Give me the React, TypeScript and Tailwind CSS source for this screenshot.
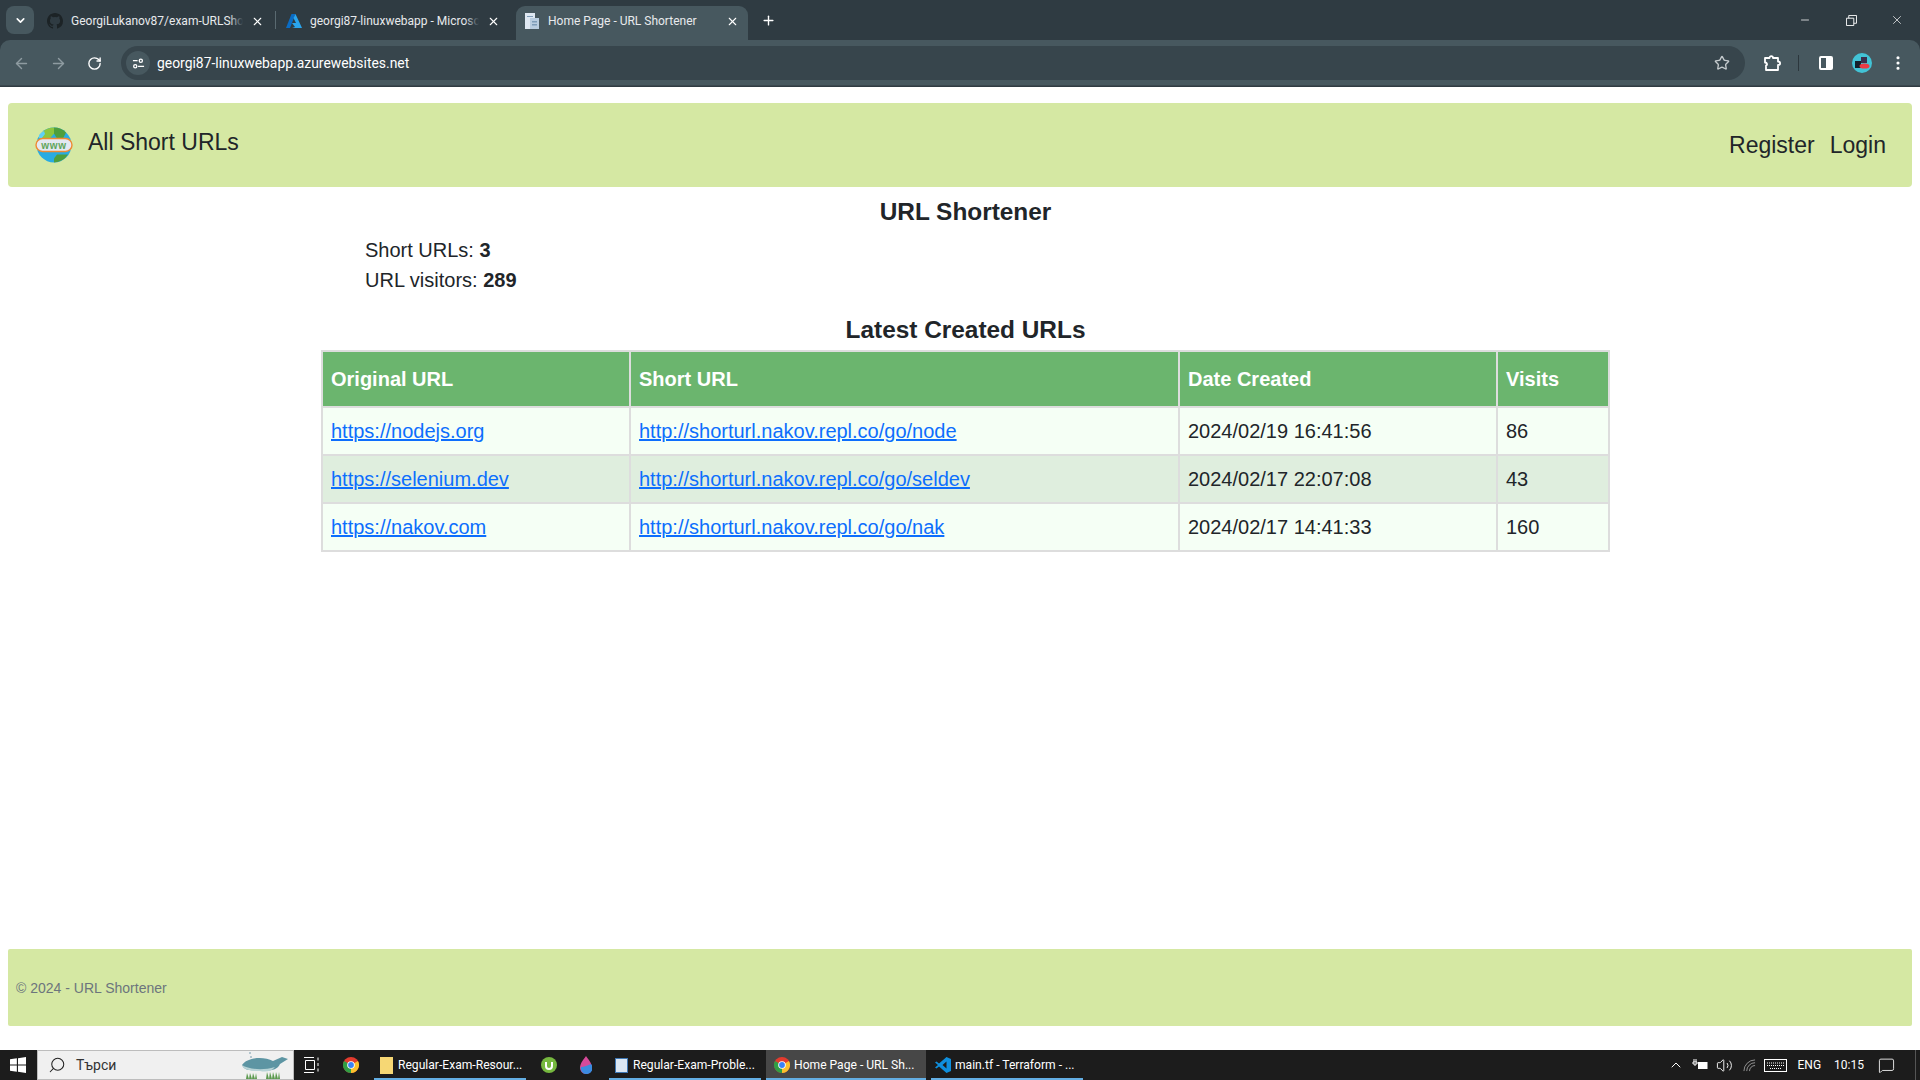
import { ChevronDown, ArrowLeft, ArrowRight, RotateCw, Star, MoreVertical, Minus, X, Plus, ChevronUp, Volume2, Search, MessageSquare } from "lucide-react";

const rows = [
  { original: "https://nodejs.org", short: "http://shorturl.nakov.repl.co/go/node", date: "2024/02/19 16:41:56", visits: 86 },
  { original: "https://selenium.dev", short: "http://shorturl.nakov.repl.co/go/seldev", date: "2024/02/17 22:07:08", visits: 43 },
  { original: "https://nakov.com", short: "http://shorturl.nakov.repl.co/go/nak", date: "2024/02/17 14:41:33", visits: 160 },
];

function GlobeIcon() {
  return (
    <svg viewBox="0 0 38 36" className="w-[38px] h-[36px]">
      <circle cx="19" cy="18" r="17.500" fill="#29abe2" />
      <path d="M19 .5a17.500 17.500 0 0 1 12 5l-3 6h-6l-3-5z" fill="#4e9f3d" />
      <path d="M8 4.500a17.500 17.500 0 0 1 11-4v6l-4 5H4z" fill="#8cc63f" />
      <path d="M4 8a17.500 17.500 0 0 1 5-4l1 3-3 4H4z" fill="#5fd0f5" />
      <path d="M19 35.500a17.500 17.500 0 0 0 14-8H22l-3 4z" fill="#4e9f3d" />
      <rect x="1" y="11.500" width="36" height="13" rx="6.500" fill="#e3e8f2" stroke="#f08a33" strokeWidth="1.400" />
      <text x="19" y="21.500" textAnchor="middle" fontSize="10" fontWeight="700" letterSpacing="0.800" fill="#5fa55a" fontFamily="Liberation Sans, sans-serif">www</text>
    </svg>
  );
}

function GithubMark() {
  return (
    <svg viewBox="0 0 16 16" className="w-4 h-4" fill="#1c2326">
      <path d="M8 0C3.58 0 0 3.58 0 8c0 3.54 2.29 6.53 5.47 7.59.4.07.55-.17.55-.38v-1.34c-2.23.48-2.69-1.07-2.69-1.07-.36-.92-.89-1.17-.89-1.17-.73-.5.05-.49.05-.49.8.06 1.23.82 1.23.82.71 1.22 1.87.87 2.33.66.07-.52.28-.87.51-1.07-1.78-.2-3.64-.89-3.64-3.95 0-.87.31-1.59.82-2.15-.08-.2-.36-1.02.08-2.12 0 0 .67-.21 2.2.82a7.6 7.6 0 0 1 4 0c1.53-1.04 2.2-.82 2.2-.82.44 1.1.16 1.92.08 2.12.51.56.82 1.27.82 2.15 0 3.07-1.87 3.75-3.65 3.95.29.25.54.73.54 1.48v2.2c0 .21.15.46.55.38A8 8 0 0 0 16 8c0-4.42-3.58-8-8-8z" />
    </svg>
  );
}

function AzureMark() {
  return (
    <svg viewBox="0 0 16 16" className="w-4 h-4">
      <path d="M5.500 1h4L4 15H0z" fill="#0a6cc4" />
      <path d="M9.500 1 16 15H6l3-1-3-4h4L7.500 5z" fill="#2aa5ee" />
    </svg>
  );
}

function PageMark() {
  return (
    <svg viewBox="0 0 16 16" className="w-4 h-4">
      <path d="M1 0h10v16H1z" fill="#dfe8f2" />
      <path d="M6 5h9v11H6z" fill="#b9cde0" />
      <path d="M3 3h6v1H3zM8 8h5v1.500H8zM8 11h5v1.500H8z" fill="#7d9cb8" />
    </svg>
  );
}

function ChromeLogo({ size = 16 }: { size?: number }) {
  return (
    <svg viewBox="0 0 16 16" width={size} height={size}>
      <circle cx="8" cy="8" r="8" fill="#e33b2e" />
      <path d="M8 8 1.070 4A8 8 0 0 0 8 16z" fill="#2f9e44" />
      <path d="M8 8 14.930 4A8 8 0 0 1 8 16z" fill="#fbc02d" />
      <circle cx="8" cy="8" r="3.800" fill="#fff" />
      <circle cx="8" cy="8" r="2.900" fill="#3b82f6" />
    </svg>
  );
}

function Avatar({ size }: { size: number }) {
  return (
    <svg viewBox="0 0 20 20" width={size} height={size}>
      <circle cx="10" cy="10" r="10" fill="#42c3d6" />
      <rect x="3" y="8" width="6" height="7" fill="#14202b" />
      <rect x="9" y="4" width="6" height="6" fill="#3a2f4d" />
      <ellipse cx="12.500" cy="13" rx="5" ry="2.600" fill="#ea3a45" />
    </svg>
  );
}

function Tab({ icon, title, active, className, fade }: { icon: React.ReactNode; title: string; active?: boolean; className: string; fade?: boolean }) {
  return (
    <div className={`relative h-[34px] pb-[4px] flex items-center gap-[8px] rounded-t-[9px] ${className} ${active ? "bg-[#47585f]" : ""}`}>
      <span className="shrink-0 w-4 h-4">{icon}</span>
      <span className="relative flex-1 overflow-hidden whitespace-nowrap text-[12px] text-[#e8eaed] font-['Roboto',sans-serif]">
        {title}
        {fade && <span className="absolute right-0 top-0 bottom-0 w-[14px] bg-gradient-to-l from-[#2f3b42] to-transparent" />}
      </span>
      <X className="w-[13px] h-[13px] text-white shrink-0" strokeWidth={2} />
    </div>
  );
}

function BrowserChrome() {
  return (
    <div className="shrink-0 h-[87px] bg-[#2f3b42] flex flex-col">
      <div className="h-[40px] flex items-end pl-[6px]">
        <div className="self-start mt-[6px] mr-[4px] w-[28px] h-[28px] rounded-[8px] bg-[#47585f] flex items-center justify-center">
          <ChevronDown className="w-[13px] h-[13px] text-white" strokeWidth={3} />
        </div>
        <Tab className="w-[237px] ml-[-2px] pl-[11px] pr-[9px]" icon={<GithubMark />} title="GeorgiLukanov87/exam-URLShortener" fade />
        <div className="self-center w-[1px] h-[18px] bg-[#5a6a71] mx-[2px]" />
        <Tab className="w-[238px] pl-[8px] pr-[16px]" icon={<AzureMark />} title="georgi87-linuxwebapp - Microsoft Azure" fade />
        <Tab className="w-[232px] pl-[8px] pr-[9px]" icon={<PageMark />} title="Home Page - URL Shortener" active />
        <Plus className="self-start mt-[13px] ml-[13px] w-[15px] h-[15px] text-white" strokeWidth={2.200} />
        <div className="ml-auto self-start flex items-center text-white">
          <div className="w-[46px] h-[40px] flex items-center justify-center"><Minus className="w-[12px] h-[12px]" strokeWidth={1.500} /></div>
          <div className="w-[46px] h-[40px] flex items-center justify-center">
            <svg viewBox="0 0 12 12" className="w-[11px] h-[11px]" fill="none" stroke="currentColor"><path d="M.5 3.500h8v8h-8zM3 3.500V.5h8.500V9H8.500" /></svg>
          </div>
          <div className="w-[46px] h-[40px] flex items-center justify-center"><X className="w-[14px] h-[14px]" strokeWidth={1.200} /></div>
        </div>
      </div>
      <div className="h-[46px] bg-[#47585f] rounded-t-[10px] flex items-center pt-[1px] pl-[13px] pr-[13px] border-b border-b-[#3b484f]">
        <ArrowLeft className="w-[17px] h-[17px] text-[#8e9ba1]" strokeWidth={2} />
        <ArrowRight className="ml-[20px] w-[17px] h-[17px] text-[#8e9ba1]" strokeWidth={2} />
        <RotateCw className="ml-[20px] w-[15px] h-[15px] text-white" strokeWidth={2.200} />
        <div className="ml-[19px] h-[34px] flex-1 rounded-full bg-[#37454c] flex items-center pl-[5px] pr-[15px]">
          <div className="w-[24px] h-[24px] rounded-full bg-[#47585f] flex items-center justify-center">
            <svg viewBox="0 0 14 14" className="w-[13px] h-[13px]" fill="none" stroke="#fff" strokeWidth="1.400"><path d="M1 4h5M6.500 10H13" /><circle cx="9.500" cy="4" r="1.700" /><circle cx="3.500" cy="10" r="1.700" /></svg>
          </div>
          <span className="ml-[7px] text-[13.900px] text-white font-['Roboto',sans-serif]">georgi87-linuxwebapp.azurewebsites.net</span>
          <Star className="ml-auto w-[16px] h-[16px] text-[#c4cacd]" strokeWidth={2} />
        </div>
        <svg viewBox="0 0 18 16" className="ml-[19px] w-[18px] h-[16px]" fill="none" stroke="#fff" strokeWidth="1.800" strokeLinejoin="round">
          <path d="M1 3h4.500c0-2.500 3.500-2.500 3.500 0H14v3.500c2.800 0 2.800 3.500 0 3.500V15H2v-4.500c1.500 0 1.500-3-1-3z" />
        </svg>
        <div className="ml-[16px] w-[1px] h-[16px] bg-[#2c373d]" />
        <div className="ml-[20px] w-[14px] h-[14px] rounded-[2px] border-2 border-white flex justify-end"><div className="w-[5px] bg-white" /></div>
        <div className="ml-[19px]"><Avatar size={20} /></div>
        <MoreVertical className="ml-[17px] w-[18px] h-[18px] text-white" strokeWidth={2.200} />
      </div>
    </div>
  );
}

function Navbar() {
  return (
    <nav className="mx-2 mt-4 h-[84px] shrink-0 rounded-[4px] bg-[#d5e8a3] flex items-center justify-between pl-[27px] pr-[26px] text-[#212529] font-['Liberation_Sans',sans-serif]">
      <a className="flex items-center gap-[15px]">
        <GlobeIcon />
        <span className="text-[23px] -mt-[5px]">All Short URLs</span>
      </a>
      <div className="flex items-center gap-[15px] text-[23px]">
        <a>Register</a>
        <a>Login</a>
      </div>
    </nav>
  );
}

function HomePage() {
  return (
    <main className="flex-1 pl-[11px] text-[#212529] font-['Liberation_Sans',sans-serif]">
      <h1 className="mt-[10px] text-center text-[24.400px] leading-[30px] font-bold">URL Shortener</h1>
      <div className="mx-auto w-[1287px] pl-[43px] mt-[8px] text-[20px] leading-[30px]">
        <div>Short URLs: <b>3</b></div>
        <div>URL visitors: <b>289</b></div>
      </div>
      <h2 className="mt-[20px] text-center text-[24.400px] leading-[30px] font-bold">Latest Created URLs</h2>
      <table className="mx-auto mt-[5px] w-[1287px] table-fixed border-collapse text-[20px]">
        <colgroup>
          <col className="w-[308px]" />
          <col className="w-[549px]" />
          <col className="w-[318px]" />
          <col className="w-[112px]" />
        </colgroup>
        <thead>
          <tr className="h-[56px] bg-[#6bb56e] text-white text-left">
            {["Original URL", "Short URL", "Date Created", "Visits"].map((h) => (
              <th key={h} className="border-2 border-[#dddddd] px-2 font-bold">{h}</th>
            ))}
          </tr>
        </thead>
        <tbody>
          {rows.map((row, i) => (
            <tr key={row.short} className={`h-[48px] ${i % 2 === 1 ? "bg-[#dfeede]" : "bg-[#f5fff5]"}`}>
              <td className="border-2 border-[#dddddd] px-2"><a className="text-[#0d6efd] underline">{row.original}</a></td>
              <td className="border-2 border-[#dddddd] px-2"><a className="text-[#0d6efd] underline">{row.short}</a></td>
              <td className="border-2 border-[#dddddd] px-2">{row.date}</td>
              <td className="border-2 border-[#dddddd] px-2">{row.visits}</td>
            </tr>
          ))}
        </tbody>
      </table>
    </main>
  );
}

function Footer() {
  return (
    <footer className="mx-2 mb-[24px] h-[77px] shrink-0 rounded-[2px] bg-[#d5e8a3] flex items-center pl-2 pt-[1px] text-[14px] text-[#6c757d] font-['Liberation_Sans',sans-serif]">
      © 2024 - URL Shortener
    </footer>
  );
}

function TaskItem({ icon, label, active, className }: { icon: React.ReactNode; label: string; active?: boolean; className: string }) {
  return (
    <div className={`h-full flex items-center gap-[4px] pt-[2px] border-b-2 border-b-[#63aee3] ${className} ${active ? "bg-[#474747] pl-[8px]" : "pl-[4px]"}`}>
      <span className="shrink-0 w-4 h-4 flex items-center justify-center">{icon}</span>
      <span className="text-[12.100px] text-white whitespace-nowrap">{label}</span>
    </div>
  );
}

function Taskbar() {
  return (
    <div className="shrink-0 h-[30px] bg-[#1c1c1c] flex items-center pl-[10px] text-white font-['Roboto',sans-serif]">
      <svg viewBox="0 0 14 14" className="w-4 h-4" fill="#fff"><path d="M0 2l6-.9V6.600H0zM7 1l7-1v6.600H7zM0 7.400h6v5.500L0 12zM7 7.400h7V14l-7-1z" /></svg>
      <div className="ml-[11px] w-[257px] h-full bg-[#f0f0f0] border border-[#bdbdbd] flex items-center pl-[10px] relative">
        <Search className="w-[18px] h-[18px] text-[#222] -scale-x-100" strokeWidth={1.400} />
        <span className="ml-[10px] text-[14px] text-[#333]">Търси</span>
        <svg viewBox="0 0 46 28" className="absolute right-[5px] top-0 w-[46px] h-[28px]">
          <path d="M0 14c5-8 22-9 31-4l9-4 6 2-8 5c-3 7-12 7-20 6C8 20 2 19 0 14z" fill="#5d95a3" />
          <path d="M0 14c6 4 20 6 33 2-4 5-10 5-15 4C9 20 2 19 0 14z" fill="#b7d3d6" />
          <path d="M4 28l1-6 2 6 1-6 2 6 1-6 2 6 1-6 1 6zM24 28l1-7 2 7 1-7 2 7 1-7 2 7 1-7 2 7 1-7 1 7z" fill="#5c9a4f" />
          <circle cx="8" cy="2" r="1" fill="#9fb9c5" />
          <circle cx="9" cy="6" r="1" fill="#9fb9c5" />
        </svg>
      </div>
      <svg viewBox="0 0 16 16" className="ml-[10px] w-4 h-4" fill="none" stroke="#fff" strokeWidth="1"><path d="M0 .5h10M0 15.500h10M1.500 3.500h9v9h-9zM14 .5v3M14 6v3M14 11.500v3" /></svg>
      <div className="ml-[23px]"><ChromeLogo size={16} /></div>
      <div className="ml-[15px] h-full"><TaskItem className="w-[152px]" label="Regular-Exam-Resour..." icon={<div className="w-[13px] h-[17px] bg-[#f6d774]" />} /></div>
      <svg viewBox="0 0 16 16" className="ml-[15px] w-4 h-4"><circle cx="8" cy="8" r="8" fill="#76b83f" /><path d="M5 5v4a3 3 0 0 0 6 0V5" fill="none" stroke="#fff" strokeWidth="2" /></svg>
      <svg viewBox="0 0 12 18" className="ml-[23px] w-[12px] h-[18px]"><path d="M6 0c2 3 6 7 6 12a6 6 0 0 1-12 0C0 7 4 3 6 0z" fill="#d64a9a" /><path d="M1 11c3 0 7-2 10-3a6 6 0 0 1-5 10 5.500 5.500 0 0 1-5-7z" fill="#3b8be0" /></svg>
      <div className="ml-[17px] h-full"><TaskItem className="w-[152px]" label="Regular-Exam-Proble..." icon={<div className="w-[13px] h-[15px] bg-[#dbe7f3] border border-[#3f78b5]" />} /></div>
      <div className="ml-[5px] h-full"><TaskItem className="w-[160px]" active label="Home Page - URL Sh..." icon={<ChromeLogo size={16} />} /></div>
      <div className="ml-[5px] h-full">
        <TaskItem className="w-[152px]" label="main.tf - Terraform - ..." icon={
          <svg viewBox="0 0 16 16" className="w-4 h-4"><path d="M11.500 0 16 2v12l-4.500 2L4 9.500l-2.500 2L0 10.500 3 8 0 5.500 1.500 4.500 4 6.500zM11.500 4.500 7.500 8l4 3.500z" fill="#0f8fdd" /></svg>
        } />
      </div>
      <div className="ml-auto flex items-center h-full pr-[4px]">
        <ChevronUp className="w-[16px] h-[16px]" strokeWidth={1.500} />
        <svg viewBox="0 0 16 12" className="ml-[8px] w-[16px] h-[12px]" fill="none" stroke="#fff"><path d="M2 0v3M4 0v3M1 3h4v2H1zM3 5v2" /><rect x="6.500" y="3.500" width="8.500" height="6" fill="#fff" /></svg>
        <Volume2 className="ml-[8px] w-[17px] h-[17px]" strokeWidth={1.300} />
        <svg viewBox="0 0 14 14" className="ml-[10px] w-[13px] h-[13px]" fill="none" stroke="#999" strokeWidth="1"><path d="M1 13a12 12 0 0 1 12-12M4 13a9 9 0 0 1 9-9M7 13a6 6 0 0 1 6-6" /></svg>
        <svg viewBox="0 0 23 13" className="ml-[8px] w-[23px] h-[13px]" fill="none" stroke="#fff"><rect x=".5" y=".5" width="22" height="12" /><path d="M3 4h17M3 6.500h17M6 9.500h11" strokeDasharray="1 1" /></svg>
        <span className="ml-[11px] text-[12px]">ENG</span>
        <span className="ml-[13px] text-[12px]">10:15</span>
        <MessageSquare className="ml-[14px] w-[17px] h-[17px]" strokeWidth={1.200} />
        <div className="ml-[20px] w-[1px] h-full bg-[#555]" />
      </div>
    </div>
  );
}

export default function App() {
  return (
    <div className="h-screen flex flex-col bg-white overflow-hidden">
      <BrowserChrome />
      <Navbar />
      <HomePage />
      <Footer />
      <Taskbar />
    </div>
  );
}
